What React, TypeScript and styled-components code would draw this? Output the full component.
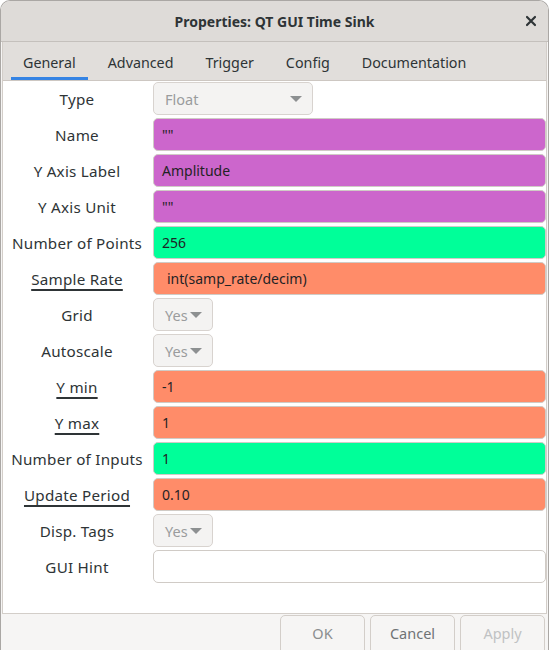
import styled, { createGlobalStyle } from "styled-components";

const Global = createGlobalStyle`
  html, body {
    margin: 0;
    padding: 0;
    background: #ffffff;
  }
  * {
    box-sizing: border-box;
  }
`;

const Window = styled.div`
  width: 549px;
  height: 650px;
  display: flex;
  flex-direction: column;
  background: #f6f5f4;
  border: 1px solid #aaa7a4;
  border-bottom: none;
  border-radius: 10px 10px 0 0;
  overflow: hidden;
  font-family: "Noto Sans", "Open Sans", sans-serif;
  color: #2e3436;
`;

const TitleBar = styled.div`
  height: 41px;
  flex-shrink: 0;
  display: grid;
  grid-template-columns: 1fr auto 1fr;
  align-items: center;
  background: #dedbd8;
  border-bottom: 1px solid #c4c0bc;
`;

const Title = styled.h1`
  grid-column: 2;
  margin: 0;
  font-size: 14px;
  font-weight: 700;
  color: #2e3436;
`;

const Close = styled.button`
  grid-column: 3;
  justify-self: end;
  margin-right: 9px;
  width: 16px;
  height: 16px;
  padding: 0;
  border: none;
  background: none;
  display: flex;
  align-items: center;
  justify-content: center;
`;

const Body = styled.div`
  flex: 1;
  display: flex;
  flex-direction: column;
  padding: 0 1px 0 1px;
`;

const Notebook = styled.div`
  flex: 1;
  display: flex;
  flex-direction: column;
  background: #ffffff;
  border: 1px solid #d3cec9;
  border-top: none;
`;

const Tabs = styled.div`
  height: 39px;
  display: flex;
  gap: 8px;
  padding-left: 8px;
  background: #e1dedb;
  border-bottom: 1px solid #cdc7c2;
`;

const Tab = styled.div<{ $active?: boolean }>`
  padding: 5px 12px 0;
  display: flex;
  align-items: center;
  font-size: 14.3px;
  color: #2e3436;
  border-bottom: 3px solid ${(p) => (p.$active ? "#3584e4" : "transparent")};
`;

const Form = styled.div`
  display: grid;
  grid-template-columns: 148px 1fr;
  column-gap: 2px;
  row-gap: 3px;
  padding: 1px 0 0 0;
  grid-auto-rows: 33px;
`;

const Label = styled.div<{ $underline?: boolean }>`
  display: flex;
  align-items: center;
  justify-content: center;
  padding-top: 1px;
  font-family: "Noto Sans", "Open Sans", sans-serif;
  font-size: 15.2px;
  letter-spacing: 0.25px;
  color: #2e3436;
  white-space: nowrap;
  text-decoration: ${(p) => (p.$underline ? "underline" : "none")};
  text-decoration-thickness: 1.5px;
  text-underline-offset: 4px;
`;

const Field = styled.div<{ $bg: string; $indent?: number }>`
  display: flex;
  align-items: center;
  padding-left: ${(p) => p.$indent ?? 8}px;
  background: ${(p) => p.$bg};
  border: 1px solid #d0cbc6;
  border-radius: 5px;
  font-size: 14px;
  color: #1f2325;
`;

const Combo = styled.div<{ $width: number }>`
  width: ${(p) => p.$width}px;
  display: flex;
  align-items: center;
  justify-content: space-between;
  padding: 0 10px 0 11px;
  background: #f4f3f2;
  border: 1px solid #d8d3cf;
  border-radius: 5px;
  font-size: 14.5px;
  color: #9a9c9d;
`;

const Arrow = styled.span`
  width: 0;
  height: 0;
  border-left: 6px solid transparent;
  border-right: 6px solid transparent;
  border-top: 6px solid #8d9091;
`;

const Buttons = styled.div`
  height: 36px;
  flex-shrink: 0;
  display: flex;
  justify-content: flex-end;
  gap: 5px;
  padding: 1px 2px 0 0;
`;

const Button = styled.button<{ $tone: string }>`
  width: 85px;
  height: 40px;
  padding: 0 0 5px 0;
  background: #f6f5f4;
  border: 1px solid #d3cec9;
  border-radius: 5px;
  font-family: "Noto Sans", "Open Sans", sans-serif;
  font-size: 14.5px;
  color: ${(p) => p.$tone};
`;

type Row =
  | { label: string; kind: "combo"; value: string; width: number; underline?: boolean }
  | { label: string; kind: "field"; value: string; bg: string; underline?: boolean; indent?: number };

const STRING = "#cc66cc";
const INT = "#00ff99";
const FLOAT = "#ff8c69";

const rows: Row[] = [
  { label: "Type", kind: "combo", value: "Float", width: 160 },
  { label: "Name", kind: "field", value: '""', bg: STRING },
  { label: "Y Axis Label", kind: "field", value: "Amplitude", bg: STRING },
  { label: "Y Axis Unit", kind: "field", value: '""', bg: STRING },
  { label: "Number of Points", kind: "field", value: "256", bg: INT },
  { label: "Sample Rate", kind: "field", value: "int(samp_rate/decim)", bg: FLOAT, underline: true, indent: 13 },
  { label: "Grid", kind: "combo", value: "Yes", width: 60 },
  { label: "Autoscale", kind: "combo", value: "Yes", width: 60 },
  { label: "Y min", kind: "field", value: "-1", bg: FLOAT, underline: true },
  { label: "Y max", kind: "field", value: "1", bg: FLOAT, underline: true },
  { label: "Number of Inputs", kind: "field", value: "1", bg: INT },
  { label: "Update Period", kind: "field", value: "0.10", bg: FLOAT, underline: true },
  { label: "Disp. Tags", kind: "combo", value: "Yes", width: 60 },
  { label: "GUI Hint", kind: "field", value: "", bg: "#ffffff" },
];

const tabs = ["General", "Advanced", "Trigger", "Config", "Documentation"];

export default function App() {
  return (
    <>
      <Global />
      <Window>
        <TitleBar>
          <Title>Properties: QT GUI Time Sink</Title>
          <Close aria-label="Close">
            <svg width="12" height="12" viewBox="0 0 12 12">
              <path d="M2 2 L10 10 M10 2 L2 10" stroke="#2e3436" strokeWidth="2.2" strokeLinecap="round" />
            </svg>
          </Close>
        </TitleBar>
        <Body>
          <Notebook>
            <Tabs>
              {tabs.map((t, i) => (
                <Tab key={t} $active={i === 0}>
                  {t}
                </Tab>
              ))}
            </Tabs>
            <Form>
              {rows.map((r) => (
                <>
                  <Label key={r.label} $underline={r.underline}>
                    {r.label}
                  </Label>
                  {r.kind === "combo" ? (
                    <Combo $width={r.width}>
                      {r.value}
                      <Arrow />
                    </Combo>
                  ) : (
                    <Field $bg={r.bg} $indent={r.indent}>
                      {r.value}
                    </Field>
                  )}
                </>
              ))}
            </Form>
          </Notebook>
          <Buttons>
            <Button $tone="#8b8e8f">OK</Button>
            <Button $tone="#6f7375">Cancel</Button>
            <Button $tone="#c0c2c3">Apply</Button>
          </Buttons>
        </Body>
      </Window>
    </>
  );
}
